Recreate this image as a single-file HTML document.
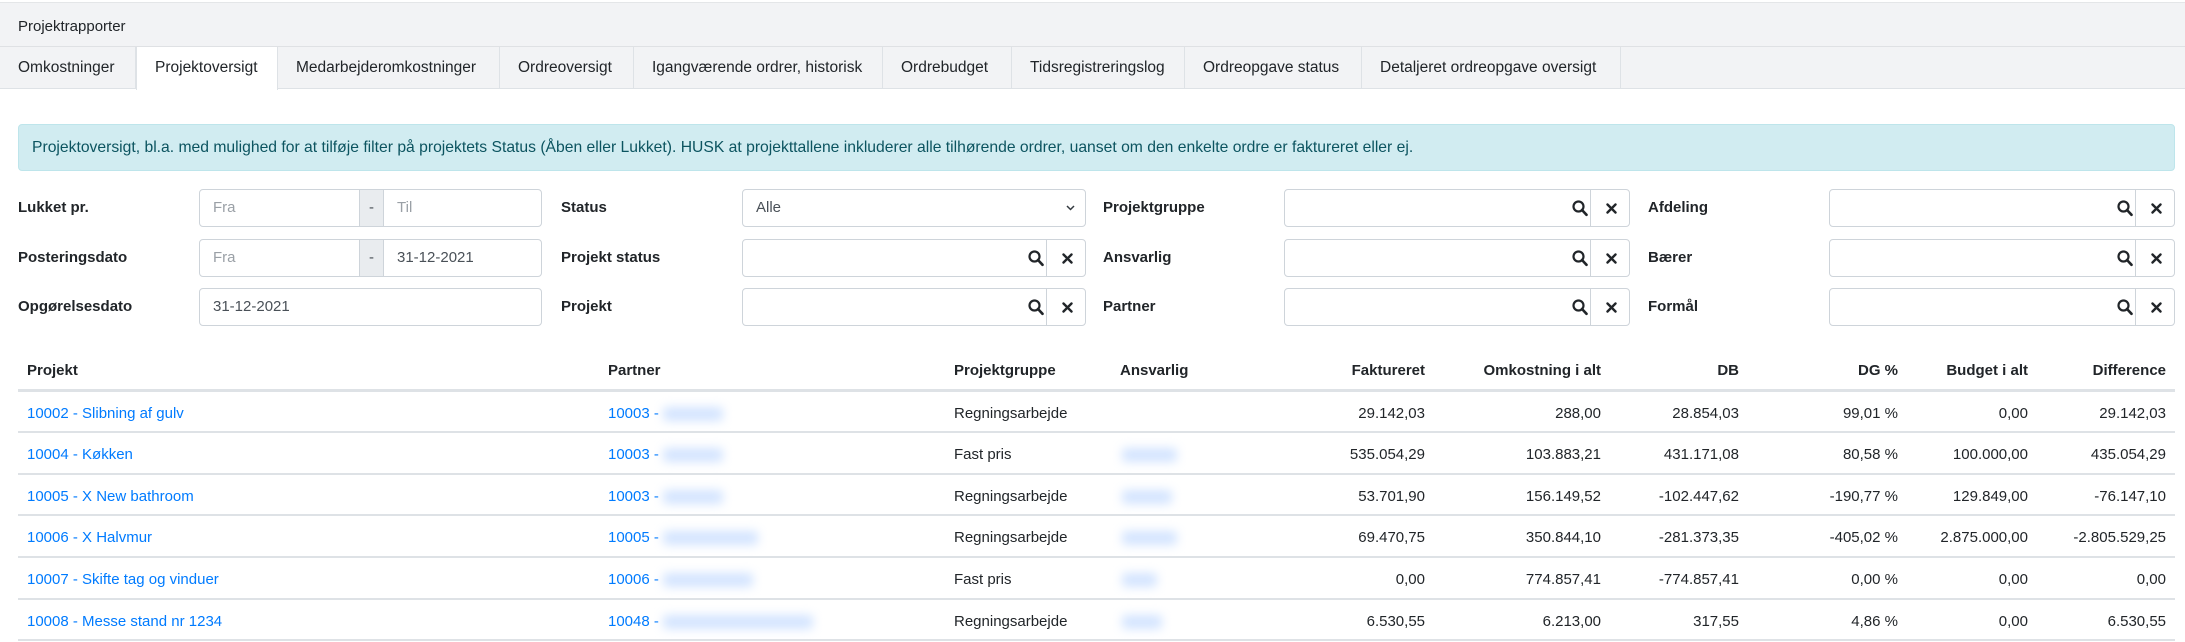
<!DOCTYPE html>
<html><head><meta charset="utf-8">
<style>
*{box-sizing:border-box;margin:0;padding:0}
body{width:2185px;height:641px;background:#fff;font-family:"Liberation Sans",sans-serif;font-size:15px;color:#212529;position:relative;overflow:hidden}
.a{position:absolute}
.hdr{left:0;top:2px;width:2185px;height:45px;background:#f2f3f5;border-top:1px solid #e4e6e8;border-bottom:1px solid #dfe1e4}
.tabs{left:0;top:47px;width:2185px;height:42px;background:#f2f3f5;border-bottom:1px solid #dee2e6}
.tab{position:absolute;top:0;height:42px;line-height:41px;border-right:1px solid #dee2e6;padding-left:18px;font-size:15.5px;color:#212529}
.tab.act{background:#fff;border-left:1px solid #dee2e6;height:43px}
.alert{left:18px;top:124px;width:2157px;height:47px;background:#d1ecf1;border:1px solid #bee5eb;border-radius:4px;color:#0c5460;line-height:45px;padding-left:13px;font-size:15.7px}
.lbl{font-weight:bold;font-size:15px;line-height:38px;height:38px}
.inp{height:38px;border:1px solid #ced4da;border-radius:4px;background:#fff;font-size:15px;line-height:36px;padding-left:13px;color:#495057}
.ph{color:#9aa0a6}
.add{height:38px;background:#e9ecef;border:1px solid #ced4da;text-align:center;line-height:36px;color:#495057}
.th{font-weight:bold;font-size:15px;top:362px}
.line{left:18px;width:2157px;height:1px;background:#dee2e6}
.c{font-size:15px}
.lk{color:#007bff}
.bl{display:inline-block;height:14px;background:#d3e4ff;filter:blur(5px);vertical-align:middle;border-radius:4px}
.r{text-align:right}
</style></head><body>
<div class="a hdr"></div>
<div class="a" style="left:18px;top:18px;font-size:15px">Projektrapporter</div>
<div class="a tabs">
<div class="tab" style="left:0;width:136px">Omkostninger</div>
<div class="tab act" style="left:136px;width:142px">Projektoversigt</div>
<div class="tab" style="left:278px;width:222px">Medarbejderomkostninger</div>
<div class="tab" style="left:500px;width:134px">Ordreoversigt</div>
<div class="tab" style="left:634px;width:249px">Igangværende ordrer, historisk</div>
<div class="tab" style="left:883px;width:129px">Ordrebudget</div>
<div class="tab" style="left:1012px;width:173px">Tidsregistreringslog</div>
<div class="tab" style="left:1185px;width:177px">Ordreopgave status</div>
<div class="tab" style="left:1362px;width:259px">Detaljeret ordreopgave oversigt</div>
</div>
<div class="a alert">Projektoversigt, bl.a. med mulighed for at tilføje filter på projektets Status (Åben eller Lukket). HUSK at projekttallene inkluderer alle tilhørende ordrer, uanset om den enkelte ordre er faktureret eller ej.</div>

<div class="a lbl" style="left:18px;top:189px">Lukket pr.</div>
<div class="a lbl" style="left:18px;top:239px">Posteringsdato</div>
<div class="a lbl" style="left:18px;top:288px">Opgørelsesdato</div>
<div class="a inp" style="left:199px;top:189px;width:343px"><span class="ph">Fra</span></div>
<div class="a add" style="left:359px;top:189px;width:25px">-</div>
<div class="a" style="left:397px;top:189px;line-height:38px"><span class="ph">Til</span></div>
<div class="a inp" style="left:199px;top:239px;width:343px"><span class="ph">Fra</span></div>
<div class="a add" style="left:359px;top:239px;width:25px">-</div>
<div class="a" style="left:397px;top:239px;line-height:38px;color:#495057">31-12-2021</div>
<div class="a inp" style="left:199px;top:288px;width:343px">31-12-2021</div>

<div class="a lbl" style="left:561px;top:189px">Status</div>
<div class="a lbl" style="left:561px;top:239px">Projekt status</div>
<div class="a lbl" style="left:561px;top:288px">Projekt</div>
<div class="a inp" style="left:742px;top:189px;width:344px">Alle<svg class="a" style="right:10px;top:15px" width="9" height="6" viewBox="0 0 9 6"><path d="M1 1 L4.5 4.5 L8 1" fill="none" stroke="#343a40" stroke-width="1.5"/></svg></div>
<div class="a lbl" style="left:1103px;top:189px">Projektgruppe</div>
<div class="a lbl" style="left:1103px;top:239px">Ansvarlig</div>
<div class="a lbl" style="left:1103px;top:288px">Partner</div>
<div class="a lbl" style="left:1648px;top:189px">Afdeling</div>
<div class="a lbl" style="left:1648px;top:239px">Bærer</div>
<div class="a lbl" style="left:1648px;top:288px">Formål</div>

<div id="srch"></div>

<div class="a th" style="left:27px">Projekt</div>
<div class="a th" style="left:608px">Partner</div>
<div class="a th" style="left:954px">Projektgruppe</div>
<div class="a th" style="left:1120px">Ansvarlig</div>
<div class="a th r" style="right:760px">Faktureret</div>
<div class="a th r" style="right:584px">Omkostning i alt</div>
<div class="a th r" style="right:446px">DB</div>
<div class="a th r" style="right:287px">DG %</div>
<div class="a th r" style="right:157px">Budget i alt</div>
<div class="a th r" style="right:19px">Difference</div>
<div class="a line" style="top:389px;height:3px"></div>
<div id="rows"></div>
<script>
var s='';
[[742,239],[742,288],[1284,189],[1284,239],[1284,288],[1829,189],[1829,239],[1829,288]].forEach(function(p){
var w=(p[0]==742?344:346);
s+='<div class="a inp" style="left:'+p[0]+'px;top:'+p[1]+'px;width:'+w+'px;padding:0">'+
'<svg class="a" style="left:'+(w-59)+'px;top:10px" width="16" height="17" viewBox="0 0 16 17"><circle cx="6.5" cy="6.5" r="5" fill="none" stroke="#212529" stroke-width="2.2"/><path d="M10 10 L14.5 14.8" stroke="#212529" stroke-width="2.6" stroke-linecap="round"/></svg>'+
'<div class="a" style="left:'+(w-41)+'px;top:-1px;height:38px;border-left:1px solid #ced4da;width:40px"></div>'+
'<svg class="a" style="left:'+(w-25)+'px;top:13px" width="11" height="11" viewBox="0 0 11 11"><path d="M1.5 1.5 L9.5 9.5 M9.5 1.5 L1.5 9.5" stroke="#212529" stroke-width="2.4" stroke-linecap="round"/></svg></div>';
});
document.getElementById('srch').innerHTML=s;
var rows=[
["10002 - Slibning af gulv","10003",60,"Regningsarbejde",0,"29.142,03","288,00","28.854,03","99,01 %","0,00","29.142,03"],
["10004 - Køkken","10003",60,"Fast pris",55,"535.054,29","103.883,21","431.171,08","80,58 %","100.000,00","435.054,29"],
["10005 - X New bathroom","10003",60,"Regningsarbejde",50,"53.701,90","156.149,52","-102.447,62","-190,77 %","129.849,00","-76.147,10"],
["10006 - X Halvmur","10005",95,"Regningsarbejde",55,"69.470,75","350.844,10","-281.373,35","-405,02 %","2.875.000,00","-2.805.529,25"],
["10007 - Skifte tag og vinduer","10006",90,"Fast pris",35,"0,00","774.857,41","-774.857,41","0,00 %","0,00","0,00"],
["10008 - Messe stand nr 1234","10048",150,"Regningsarbejde",40,"6.530,55","6.213,00","317,55","4,86 %","0,00","6.530,55"]];
var rs=[392,432,474,515,557,599],re=[432,474,515,557,599,640];
var rights=[760,584,446,287,157,19];
var h='';
rows.forEach(function(r,i){
var top=rs[i]+2,ht=re[i]-rs[i],lh='line-height:'+ht+'px;top:'+top+'px;height:'+ht+'px';
h+='<div class="a c lk" style="left:27px;'+lh+'">'+r[0]+'</div>';
h+='<div class="a c lk" style="left:608px;'+lh+'">'+r[1]+' - <span class="bl" style="width:'+r[2]+'px"></span></div>';
h+='<div class="a c" style="left:954px;'+lh+'">'+r[3]+'</div>';
if(r[4])h+='<div class="a c" style="left:1122px;'+lh+'"><span class="bl" style="width:'+r[4]+'px"></span></div>';
for(var k=0;k<6;k++)h+='<div class="a c r" style="right:'+rights[k]+'px;'+lh+'">'+r[5+k]+'</div>';
h+='<div class="a line" style="top:'+(re[i]-1)+'px;height:2px"></div>';
});
document.getElementById('rows').innerHTML=h;
</script>
</body></html>
